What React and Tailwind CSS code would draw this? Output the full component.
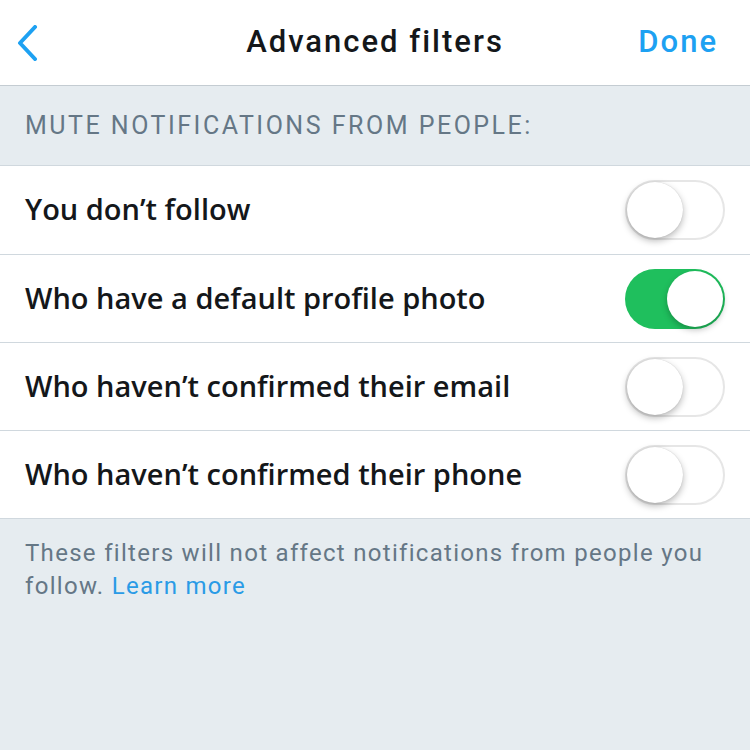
import React from "react";

function Toggle({ on }) {
  if (on) {
    return (
      <div className="relative w-[100px] h-[60px] rounded-full bg-[#1fbf5d] shrink-0">
        <div className="absolute right-[2px] top-[2px] w-[56px] h-[56px] rounded-full bg-white shadow-[0_3px_6px_rgba(0,0,0,0.25)]" />
      </div>
    );
  }
  return (
    <div className="relative w-[100px] h-[60px] rounded-full bg-white border-[2px] border-[#e6e6e6] shrink-0">
      <div className="absolute left-0 top-0 w-[56px] h-[56px] rounded-full bg-white shadow-[0_3px_7px_rgba(0,0,0,0.28),0_0_1px_rgba(0,0,0,0.2)]" />
    </div>
  );
}

function Row({ label, on, tall }) {
  return (
    <div
      className={
        tall
          ? "flex items-center justify-between h-[89px] pl-[25px] pr-[25px] bg-white border-b border-[#d0d8de]"
          : "flex items-center justify-between h-[88px] pl-[25px] pr-[25px] bg-white border-b border-[#d0d8de]"
      }
    >
      <span className="text-[29px] leading-[36px] pb-[2px] font-semibold text-[#14171a] font-['Open_Sans','Noto_Sans',sans-serif]">
        {label}
      </span>
      <Toggle on={on} />
    </div>
  );
}

export default function App() {
  return (
    <div className="w-[750px] h-[750px] bg-[#e6ecf0] flex flex-col font-['Roboto','Liberation_Sans',sans-serif]">
      <div className="h-[86px] bg-white border-b border-[#c4ccd2] flex items-center justify-between px-[17px] relative">
        <svg width="22" height="36" viewBox="0 0 22 36">
          <path d="M18 2 L3 18 L18 34" fill="none" stroke="#1da1f2" strokeWidth="4" strokeLinecap="round" strokeLinejoin="round" />
        </svg>
        <span className="absolute left-0 right-0 text-center text-[31px] font-medium tracking-[2px] text-[#14171a] pointer-events-none">
          Advanced filters
        </span>
        <span className="text-[31px] font-medium tracking-[2px] text-[#1da1f2] mr-[15px]">Done</span>
      </div>
      <div className="h-[80px] flex items-center px-[25px] border-b border-[#d0d8de]">
        <span className="text-[25px] text-[#657786] tracking-[2.5px]">MUTE NOTIFICATIONS FROM PEOPLE:</span>
      </div>
      <Row label="You don’t follow" on={false} tall />
      <Row label="Who have a default profile photo" on={true} />
      <Row label="Who haven’t confirmed their email" on={false} />
      <Row label="Who haven’t confirmed their phone" on={false} />
      <p className="px-[25px] pt-[18px] text-[24px] leading-[33px] tracking-[1.3px] text-[#657786]">
        These filters will not affect notifications from people you follow.{" "}
        <span className="text-[#2a9be6]">Learn more</span>
      </p>
    </div>
  );
}
